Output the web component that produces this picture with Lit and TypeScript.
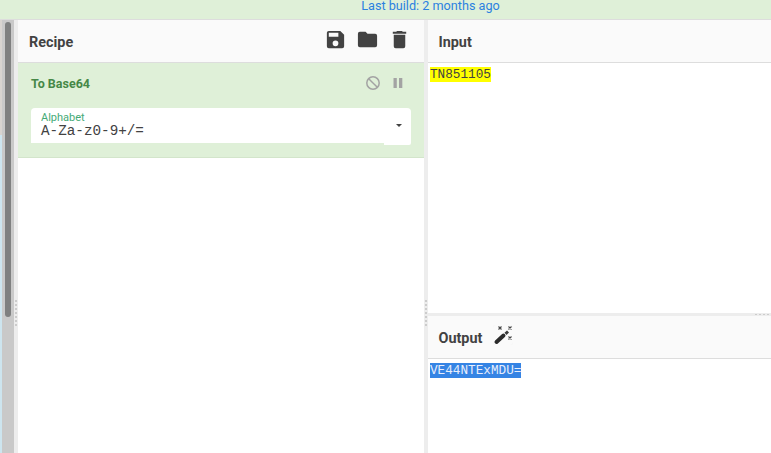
import { LitElement, html, css } from "lit";
import { customElement } from "lit/decorators.js";

@customElement("app-root")
export class AppRoot extends LitElement {
  static styles = css`
    :host { display: block; width: 771px; height: 453px; overflow: hidden; background: #fff; font-family: Roboto, sans-serif; color: #424242; }
    * { box-sizing: border-box; }
    .banner { height: 20px; background: #dff0d8; border-bottom: 1px solid #ddd; color: #2b81e0; font-size: 12.65px; line-height: 12px; text-align: center; padding-left: 90px; white-space: nowrap; }
    .main { display: flex; height: 433px; }
    .rail { width: 14px; background: #c9c9c9; position: relative; flex: none; }
    .rail::before { content: ""; position: absolute; left: 0; top: 0; bottom: 0; width: 2px; background: linear-gradient(#d8d4d0 0 115px, #cde5ef 115px); }
    .thumb { position: absolute; left: 5px; top: 2px; width: 6px; height: 295px; background: #7f8080; border-radius: 3px; }
    .gut { width: 4px; flex: none; background: #ededed; position: relative; }
    .dots { position: absolute; left: 1px; top: 280px; width: 2px; height: 28px; background: repeating-linear-gradient(#ccc 0 2px, transparent 2px 4px); }
    .recipe { width: 406px; flex: none; display: flex; flex-direction: column; }
    .head { height: 43px; background: #fafafa; border-bottom: 1px solid #ddd; display: flex; align-items: center; font-size: 14.4px; font-weight: 700; padding: 2px 0 0 11px; flex: none; }
    .right .head { padding-left: 10.5px; }
    .tools { margin-left: auto; margin-bottom: 6px; display: flex; gap: 9px; padding-right: 13px; align-items: center; }
    .tools svg { display: block; fill: #424242; }
    .op { height: 95px; background: #dff0d8; border-bottom: 1px solid #d3e5cb; padding: 0 13px; flex: none; }
    .op-top { display: flex; align-items: center; height: 41px; }
    .op-name { color: #468847; font-size: 12.5px; font-weight: 700; }
    .op-ctl { margin-left: auto; margin-bottom: 1px; display: flex; align-items: center; gap: 11px; padding-right: 7px; }
    .op-ctl svg { display: block; }
    .field { position: relative; height: 35px; margin-top: 4px; background: #fff; border-radius: 4px 4px 0 0; padding: 4px 10px 0 11px; width: 380px; }
    .field::after { content: ""; position: absolute; right: 0; top: 35px; width: 27px; height: 2px; background: #fff; border-radius: 0 0 4px 0; }
    .field label { display: block; color: #2fa268; font-size: 11px; line-height: 11px; opacity: .9; margin-left: -1px; }
    .field .v { font-family: "Liberation Mono", monospace; font-size: 14.3px; line-height: 15px; color: #424242; margin: 1px 0 0 -1px; }
    .caret { position: absolute; right: 9px; top: 16px; width: 0; height: 0; border: 3px solid transparent; border-top: 3px solid #424242; }
    .body { flex: 1; }
    .right { flex: 1; display: flex; flex-direction: column; min-width: 0; }
    .pane-in { height: 293px; flex: none; }
    .text { padding: 4px 2px 0 2px; font-family: "Liberation Mono", monospace; font-size: 12.7px; white-space: pre; }
    .text span { display: block; width: fit-content; height: 15px; line-height: 15px; }
    .hl { background: #ff0; color: #424242; }
    .sel { background: #3584e4; color: #e8eefc; }
    .hgut { height: 3px; flex: none; background: #ededed; position: relative; }
    .hdots { position: absolute; right: 0; top: 1px; width: 16px; height: 1px; background: repeating-linear-gradient(90deg, #ccc 0 2px, transparent 2px 4px); }
    .wand { margin: 0 0 6px 11px; display: block; }
  `;
  render() {
    return html`
      <div class="banner">Last build: 2 months ago</div>
      <div class="main">
        <div class="rail"><div class="thumb"></div></div>
        <div class="gut"><div class="dots"></div></div>
        <div class="recipe">
          <div class="head"><span>Recipe</span>
            <div class="tools">
              <svg width="23" height="23" viewBox="0 0 24 24"><path d="M17 3H5a2 2 0 0 0-2 2v14a2 2 0 0 0 2 2h14a2 2 0 0 0 2-2V7l-4-4zm-5 16a3 3 0 1 1 0-6 3 3 0 0 1 0 6zm3-10H5V5h10v4z"/></svg>
              <svg width="23" height="23" viewBox="0 0 24 24"><path d="M10 4H4a2 2 0 0 0-2 2v12a2 2 0 0 0 2 2h16a2 2 0 0 0 2-2V8a2 2 0 0 0-2-2h-8l-2-2z"/></svg>
              <svg width="23" height="23" viewBox="0 0 24 24"><path d="M6 19a2 2 0 0 0 2 2h8a2 2 0 0 0 2-2V7H6v12zM19 4h-3.500l-1-1h-5l-1 1H5v2h14V4z"/></svg>
            </div>
          </div>
          <div class="op">
            <div class="op-top"><span class="op-name">To Base64</span>
              <div class="op-ctl">
                <svg width="16" height="16" viewBox="0 0 16 16" fill="none" stroke="#a3a3a3" stroke-width="1.500"><circle cx="8" cy="8" r="6.200"/><path d="M3.700 3.700l8.600 8.600"/></svg>
                <svg width="12" height="12" viewBox="0 0 12 12" fill="#a3a3a3"><rect x="1.500" y="1" width="3.300" height="10"/><rect x="7" y="1" width="3.300" height="10"/></svg>
              </div>
            </div>
            <div class="field"><label>Alphabet</label><div class="v">A-Za-z0-9+/=</div><i class="caret"></i></div>
          </div>
          <div class="body"></div>
        </div>
        <div class="gut"><div class="dots"></div></div>
        <div class="right">
          <div class="pane-in">
            <div class="head"><span>Input</span></div>
            <div class="text"><span class="hl">TN851105</span></div>
          </div>
          <div class="hgut"><div class="hdots"></div></div>
          <div class="head"><span>Output</span>
            <svg class="wand" width="20" height="20" viewBox="0 0 20 20">
              <circle cx="10" cy="10" r="13" fill="none" stroke="#f3f3f3" stroke-width="0.500"/>
              <path d="M3.500 17L10.500 10.500" stroke="#2b2b2b" stroke-width="4" stroke-linecap="round" fill="none"/>
              <path d="M12.500 8.800L15 6.500" stroke="#3a3a3a" stroke-width="3" fill="none"/>
              <path d="M5.500 1.500l3 3M8.500 1.500l-3 3M15.500 1.500l3 3M18.500 1.500l-3 3M15.500 11.500l3 3M18.500 11.500l-3 3" stroke="#444" stroke-width="1.100" fill="none"/>
            </svg>
          </div>
          <div class="text"><span class="sel">VE44NTExMDU=</span></div>
        </div>
      </div>
    `;
  }
}
